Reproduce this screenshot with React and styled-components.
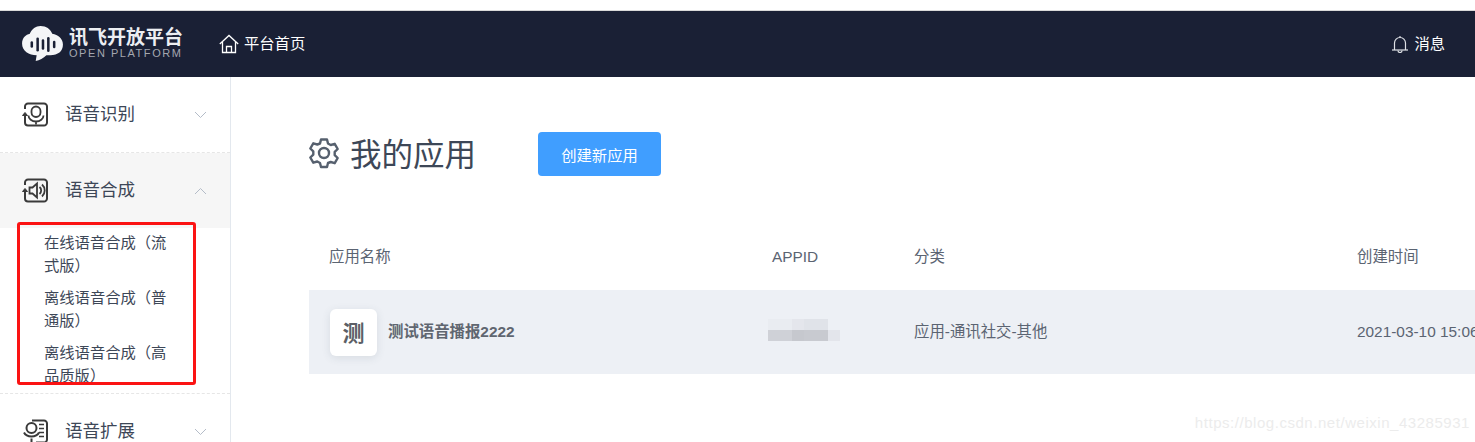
import React from 'react';
import styled, { createGlobalStyle } from 'styled-components';

const GlobalStyle = createGlobalStyle`
  * {
    box-sizing: border-box;
  }

  html, body {
    margin: 0;
    padding: 0;
    background: #fff;
    overflow: hidden;
  }

  body {
    font-family: "Liberation Sans", "Noto Sans CJK SC", sans-serif;
  }
`;

const Page = styled.div`
  position: relative;
  width: 1475px;
  height: 442px;
  padding-top: 10px;
  overflow: hidden;
`;

const Header = styled.header`
  height: 67px;
  border-top: 1px solid #d9d9d9;
  background-color: #1a2035;
  display: flex;
  align-items: center;
  padding: 0 30px 0 22px;
  color: #fff;
`;

const Logo = styled.div`
  display: flex;
  align-items: center;
  gap: 6px;
  width: 197px;
`;

const LogoText = styled.div`
  display: flex;
  flex-direction: column;
  line-height: 1;
  margin-bottom: 2px;
`;

const LogoTitle = styled.span`
  font-size: 19px;
  font-weight: 700;
  color: #eceef2;
`;

const LogoSub = styled.span`
  font-size: 11px;
  letter-spacing: 1.55px;
  color: #a4a7b0;
  margin-top: 1px;
`;

const NavLink = styled.a`
  display: flex;
  align-items: center;
  gap: 5px;
  font-size: 15.3px;
  color: #fff;
  margin-left: ${(p) => (p.$right ? 'auto' : '0')};
`;

const NavText = styled.span`
  padding-bottom: 5px;
`;

const Body = styled.div`
  display: flex;
  height: 365px;
`;

const Sidebar = styled.aside`
  width: 231px;
  flex-shrink: 0;
  border-right: 1px solid #e3e8ee;
`;

const MenuGroup = styled.div`
  border-bottom: 1px dashed #e6e6e6;
`;

const MenuTitle = styled.div`
  height: 75px;
  display: flex;
  align-items: center;
  padding: 0 23px 0 22px;
  background-color: ${(p) => (p.$active ? '#f6f6f6' : '#fff')};
`;

const MenuLabel = styled.span`
  font-size: 17.5px;
  color: #3d4757;
  margin-left: 17px;
  padding-bottom: 5px;
  flex: 1;
`;

const SubMenu = styled.div`
  height: 165px;
  padding: 3px 60px 0 44px;
`;

const SubList = styled.div`
  height: 152px;
  overflow: hidden;
`;

const SubItem = styled.div`
  font-size: 15.3px;
  line-height: 23px;
  color: #3d4757;
  margin-bottom: 9px;
`;

const Main = styled.main`
  flex: 1;
  min-width: 0;
  padding: 55px 0 0 78px;
`;

const TitleRow = styled.div`
  display: flex;
  align-items: center;
  height: 44px;
`;

const GearWrap = styled.div`
  display: flex;
  margin: 0 -1px 3px -1px;
`;

const Title = styled.h1`
  margin: 0 0 5px 11px;
  width: 188px;
  font-size: 31.5px;
  font-weight: 400;
  color: #3d4757;
`;

const PrimaryButton = styled.button`
  width: 123px;
  height: 44px;
  border: none;
  border-radius: 4px;
  background-color: #409eff;
  color: #fff;
  font-family: inherit;
  font-size: 15.3px;
`;

const Table = styled.div`
  margin-top: 36px;
  width: 1200px;
`;

const Row = styled.div`
  display: grid;
  grid-template-columns: 443px 142px 443px 172px;
  align-items: center;
  padding-left: 20px;
  height: ${(p) => (p.$head ? '78px' : '84px')};
  padding-top: ${(p) => (p.$head ? '8px' : '0')};
  background-color: ${(p) => (p.$head ? '#fff' : '#edf0f5')};
  font-size: 15.4px;
  white-space: nowrap;
  color: #5b6472;
`;

const HeadLatin = styled.span`
  padding-top: 3px;
`;

const CellText = styled.span`
  padding-bottom: ${(p) => (p.$latin ? '1px' : '5px')};
`;

const AppCell = styled.div`
  display: flex;
  align-items: center;
  gap: 11px;
  margin-left: 1px;
`;

const AppBadge = styled.div`
  width: 47px;
  height: 47px;
  border-radius: 6px;
  background-color: #fff;
  box-shadow: 0 2px 8px rgba(60, 70, 90, 0.12);
  display: flex;
  align-items: center;
  justify-content: center;
  font-size: 22px;
  font-weight: 700;
  padding-bottom: 3px;
  color: #5c5f66;
`;

const AppName = styled.span`
  font-weight: 700;
  padding-bottom: 5px;
  color: #606670;
`;

const Mosaic = styled.div`
  display: grid;
  grid-template-columns: repeat(6, 12px);
  grid-auto-rows: 11px;
  margin: 0 0 4px -4px;
  filter: blur(0.5px);
`;

const MosaicCell = styled.div`
  background-color: ${(p) => p.$color};
`;

const Highlight = styled.div`
  position: absolute;
  left: 17px;
  top: 222px;
  width: 179px;
  height: 163px;
  border: 3px solid #fb1313;
  border-radius: 3px;
  pointer-events: none;
`;

const Watermark = styled.div`
  position: absolute;
  right: 5px;
  top: 414px;
  font-size: 15px;
  letter-spacing: 0.54px;
  color: #ececec;
`;

const mosaicColors = [
  '#e9ecf1', '#e9ecf1', '#e4e6ec', '#e0e3e9', '#e0e3e9', '#edf0f5',
  '#cfd1d7', '#cfd1d7', '#c6c8ce', '#c8cad0', '#c8cad0', '#e3e5eb',
];

const Chevron = ({ up }) => (
  <svg width="13" height="8" viewBox="0 0 13 8" fill="none" stroke="#b4bcc8" strokeWidth="1">
    <path d={up ? 'M1 7l5.5-5.5L12 7' : 'M1 1l5.5 5.5L12 1'} />
  </svg>
);

const FrameIcon = ({ children }) => (
  <svg width="26" height="25" viewBox="0 0 26 25" fill="none" stroke="#3a3a3a" strokeWidth="2">
    <path d="M3 7V4.500a3 3 0 0 1 3-3h16a3 3 0 0 1 3 3v16a3 3 0 0 1-3 3H6a3 3 0 0 1-3-3v-7" />
    <path d="M0.500 13.500L3 10.500l2.500 3z" fill="#3a3a3a" strokeWidth="1" />
    {children}
  </svg>
);

const DocMicIcon = () => (
  <svg width="26" height="25" viewBox="0 0 26 25" fill="none" stroke="#3a3a3a" strokeWidth="2">
    <path d="M10 1.500h12a3 3 0 0 1 3 3v16a3 3 0 0 1-3 3h-8" />
    <circle cx="9.500" cy="9" r="5" />
    <path d="M2 13.500a8 6 0 0 0 15 0M9.500 19.500v4" />
    <path d="M17 5.500h5M17 9.500h5M17 13.500h5M17 17.500h5" strokeWidth="1.600" />
  </svg>
);

const CloudLogo = () => (
  <svg width="41" height="36" viewBox="0 0 42 37">
    <path
      fill="#f4f5f7"
      d="M14 36l1-6C7 30 0 26 0 18c0-6 4-9 8-10 2-5 6-8 11-8 6 0 10 3 12 8 6 1 11 5 11 11 0 7-5 11-13 11h-4c-3 3-7 5-11 6z"
    />
    <g stroke="#1a2035" strokeWidth="2.600" strokeLinecap="round">
      <path d="M10 17v4" />
      <path d="M16 13v12" />
      <path d="M21.500 15v8" />
      <path d="M27 12.500v13" />
      <path d="M33 16.500v5" />
    </g>
  </svg>
);

const HomeIcon = () => (
  <svg width="20" height="20" viewBox="0 0 20 20" fill="none" stroke="#fff" strokeWidth="1.300">
    <path d="M0.800 10L10 1.500 19.200 10" />
    <path d="M3.500 8v10.500h13V8" />
    <path d="M7.500 18.500v-6h5v6" />
  </svg>
);

const BellIcon = () => (
  <svg width="18" height="18" viewBox="0 0 18 18" fill="none" stroke="#dfe1e6" strokeWidth="1.200">
    <path d="M1 15h16" />
    <path d="M3.500 15V8a5.500 5.500 0 0 1 11 0v7" />
    <path d="M9 1v1.500" />
    <path d="M7 15.500a2 2 0 0 0 4 0" />
  </svg>
);

const GearIcon = () => (
  <svg width="32" height="32" viewBox="0 0 32 32" fill="none" stroke="#56606e" strokeWidth="2.400" strokeLinejoin="round">
    <path d="M13 2.500h6l1 4 2.700 1.500 4-1.200 3 5.200-3 2.900v3.200l3 2.900-3 5.200-4-1.200L20 26l-1 4h-6l-1-4-2.700-1.500-4 1.200-3-5.200 3-2.900v-3.200l-3-2.900 3-5.200 4 1.200L12 6.500z" />
    <circle cx="16" cy="16" r="5" />
  </svg>
);

const App = () => (
  <Page>
    <GlobalStyle />
    <Header>
      <Logo>
        <CloudLogo />
        <LogoText>
          <LogoTitle>讯飞开放平台</LogoTitle>
          <LogoSub>OPEN PLATFORM</LogoSub>
        </LogoText>
      </Logo>
      <NavLink>
        <HomeIcon />
        <NavText>平台首页</NavText>
      </NavLink>
      <NavLink $right>
        <BellIcon />
        <NavText>消息</NavText>
      </NavLink>
    </Header>
    <Body>
      <Sidebar>
        <MenuGroup>
          <MenuTitle>
            <FrameIcon>
              <rect x="9.500" y="4.500" width="9" height="10.500" rx="4.500" strokeWidth="1.800" />
              <path d="M6.500 13.500a7.500 6 0 0 0 15 0M14 19.500v3" strokeWidth="1.800" />
            </FrameIcon>
            <MenuLabel>语音识别</MenuLabel>
            <Chevron />
          </MenuTitle>
        </MenuGroup>
        <MenuGroup>
          <MenuTitle $active>
            <FrameIcon>
              <path d="M7.500 9.500h3l4.500-4v14l-4.500-4h-3z" strokeWidth="1.800" />
              <path d="M17.500 9a4.500 4.500 0 0 1 0 7M20 6.500a8 8 0 0 1 0 12" strokeWidth="1.800" />
            </FrameIcon>
            <MenuLabel>语音合成</MenuLabel>
            <Chevron up />
          </MenuTitle>
          <SubMenu>
            <SubList>
              <SubItem>在线语音合成（流式版）</SubItem>
              <SubItem>离线语音合成（普通版）</SubItem>
              <SubItem>离线语音合成（高品质版）</SubItem>
            </SubList>
          </SubMenu>
        </MenuGroup>
        <MenuGroup>
          <MenuTitle>
            <DocMicIcon />
            <MenuLabel>语音扩展</MenuLabel>
            <Chevron />
          </MenuTitle>
        </MenuGroup>
      </Sidebar>
      <Main>
        <TitleRow>
          <GearWrap>
            <GearIcon />
          </GearWrap>
          <Title>我的应用</Title>
          <PrimaryButton>创建新应用</PrimaryButton>
        </TitleRow>
        <Table>
          <Row $head>
            <span>应用名称</span>
            <HeadLatin>APPID</HeadLatin>
            <span>分类</span>
            <span>创建时间</span>
          </Row>
          <Row>
            <AppCell>
              <AppBadge>测</AppBadge>
              <AppName>测试语音播报2222</AppName>
            </AppCell>
            <Mosaic>
              {mosaicColors.map((color, i) => (
                <MosaicCell key={i} $color={color} />
              ))}
            </Mosaic>
            <CellText>应用-通讯社交-其他</CellText>
            <CellText $latin>2021-03-10 15:06</CellText>
          </Row>
        </Table>
      </Main>
    </Body>
    <Highlight />
    <Watermark>https://blog.csdn.net/weixin_43285931</Watermark>
  </Page>
);

export default App;
